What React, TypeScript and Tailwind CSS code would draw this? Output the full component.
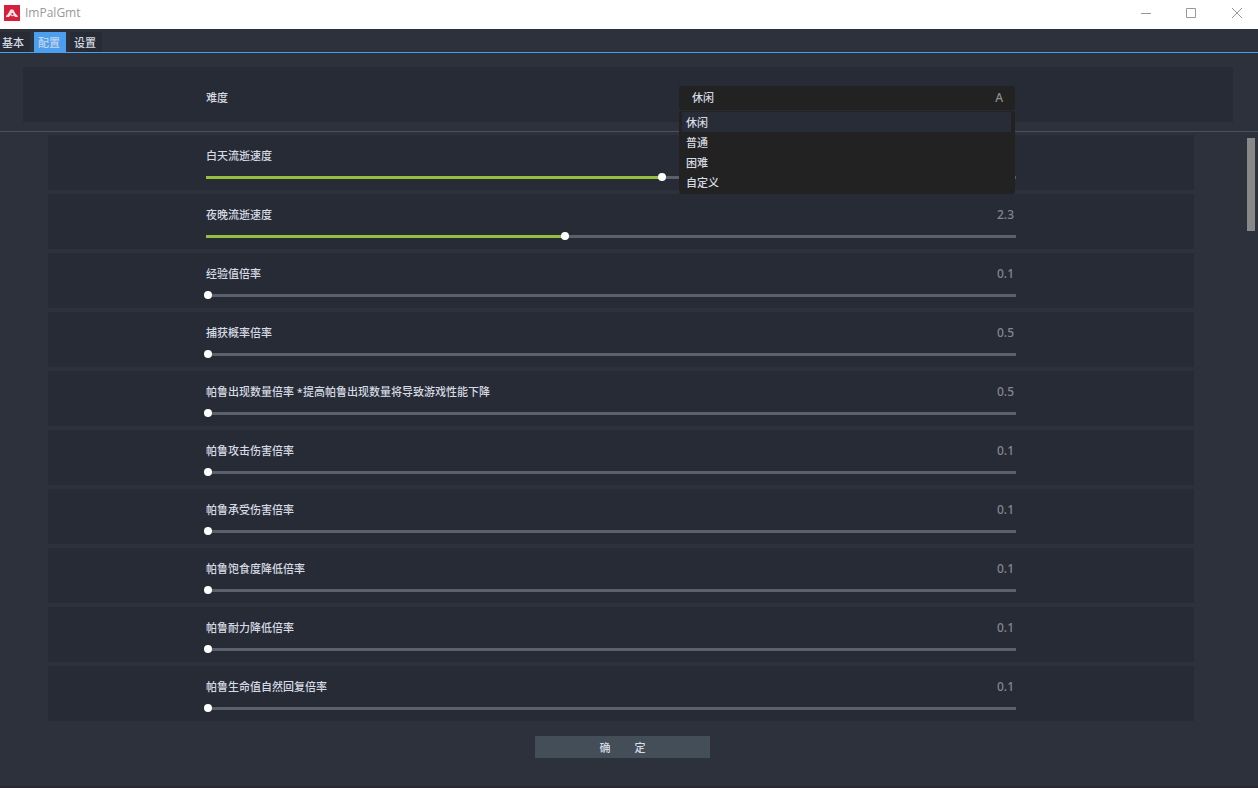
import { useState } from "react";
import type { CSSProperties } from "react";

const TABS = ["基本", "配置", "设置"];
const LEVELS = ["休闲", "普通", "困难", "自定义"];

type Setting = { label: string; min: number; max: number; value: number };

const SETTINGS: Setting[] = [
  { label: "白天流逝速度", min: 0.1, max: 5, value: 2.86 },
  { label: "夜晚流逝速度", min: 0.1, max: 5, value: 2.27 },
  { label: "经验值倍率", min: 0.1, max: 20, value: 0.1 },
  { label: "捕获概率倍率", min: 0.5, max: 2, value: 0.5 },
  { label: "帕鲁出现数量倍率 *提高帕鲁出现数量将导致游戏性能下降", min: 0.5, max: 3, value: 0.5 },
  { label: "帕鲁攻击伤害倍率", min: 0.1, max: 5, value: 0.1 },
  { label: "帕鲁承受伤害倍率", min: 0.1, max: 5, value: 0.1 },
  { label: "帕鲁饱食度降低倍率", min: 0.1, max: 5, value: 0.1 },
  { label: "帕鲁耐力降低倍率", min: 0.1, max: 5, value: 0.1 },
  { label: "帕鲁生命值自然回复倍率", min: 0.1, max: 5, value: 0.1 },
];

function TitleBar() {
  return (
    <header className="flex h-[29px] justify-between bg-white pl-1 text-[#999999]">
      <div className="flex h-[26px] items-center gap-[5px]">
        <svg width="16" height="16" viewBox="0 0 16 16" aria-hidden="true">
          <rect width="16" height="16" fill="#d61f3c" />
          <path d="M2 12V11L4 9 6.4 4.4H9.2L11.4 8.4 13.8 11V12H11L9.8 10.6 8.6 11.6 6.6 10.2 5 12Z" fill="#f1e6e6" />
          <path d="M7 9 8.2 7.8 9.6 9.2 8.6 10.2Z" fill="#d61f3c" />
        </svg>
        <h1 className="font-['Open_Sans','Noto_Sans',sans-serif] text-[12px] leading-4 font-normal">ImPalGmt</h1>
      </div>
      <div className="flex">
        <button type="button" aria-label="最小化" className="flex h-[26px] w-[45px] items-center justify-center">
          <svg width="10" height="10" viewBox="0 0 10 10" fill="none" stroke="currentColor"><path d="M0 5.5h10" /></svg>
        </button>
        <button type="button" aria-label="最大化" className="flex h-[26px] w-[45px] items-center justify-center">
          <svg width="10" height="10" viewBox="0 0 10 10" fill="none" stroke="currentColor"><path d="M.5.5h9v9h-9z" /></svg>
        </button>
        <button type="button" aria-label="关闭" className="flex h-[26px] w-[45px] items-center justify-center pl-[2px]">
          <svg width="10" height="10" viewBox="0 0 10 10" fill="none" stroke="currentColor"><path d="m0 0 10 10M10 0 0 10" /></svg>
        </button>
      </div>
    </header>
  );
}

function Tabs() {
  const [active, setActive] = useState(1);
  return (
    <nav role="tablist" className="flex gap-1 border-b border-[#4b9fee] pt-[3px]">
      {TABS.map((tab, i) => (
        <button
          key={tab}
          type="button"
          role="tab"
          aria-selected={i === active}
          onClick={() => setActive(i)}
          className={
            "h-5 pt-[2px] text-left leading-[18px] " +
            (i === 0 ? "w-[30px] pl-[2px] " : "w-8 pl-1 ") +
            (i === active ? "bg-[#4b9fee] text-[#c4d6ec]" : "bg-[#272b35] text-[#d5dae3]")
          }
        >
          {tab}
        </button>
      ))}
    </nav>
  );
}

function Difficulty() {
  const [open, setOpen] = useState(true);
  const [level, setLevel] = useState(LEVELS[0]);
  return (
    <section className="mr-[25px] ml-[23px] flex h-[55px] items-center justify-between bg-[#272b35] pt-[6px] pr-[218px] pl-[183px]">
      <label htmlFor="level" className="pt-[2px]">难度</label>
      <div className="relative w-[336px]">
        <select
          id="level"
          value={level}
          onChange={(e) => setLevel(e.target.value)}
          onMouseDown={(e) => {
            e.preventDefault();
            setOpen(!open);
          }}
          className="block h-6 w-full appearance-none rounded-[3px] bg-[#222222] px-[13px] pt-[2px] outline-none"
        >
          {LEVELS.map((name) => (
            <option key={name}>{name}</option>
          ))}
        </select>
        <span aria-hidden="true" className="pointer-events-none absolute top-0 right-3 text-[12px] leading-6 text-[#8e8e8e]">
          A
        </span>
        {open && (
          <ul role="listbox" aria-label="难度" className="absolute top-[25px] left-0 z-10 w-full rounded-[3px] bg-[#222222] pt-[1px] pr-1 pb-[2px] pl-[3px]">
            {LEVELS.map((name) => (
              <li
                key={name}
                role="option"
                aria-selected={name === level}
                onClick={() => {
                  setLevel(name);
                  setOpen(false);
                }}
                className="h-5 px-1 pt-[1px] leading-5 aria-selected:bg-[#282c36]"
              >
                {name}
              </li>
            ))}
          </ul>
        )}
      </div>
    </section>
  );
}

function SettingRow({ setting, id }: { setting: Setting; id: string }) {
  const [value, setValue] = useState(setting.value);
  const percent = ((value - setting.min) / (setting.max - setting.min)) * 100;
  return (
    <li className="h-[55px] bg-[#272b35] pt-[13px] pr-[178px] pl-[158px]">
      <div className="flex h-4 items-center justify-between pr-[2px]">
        <label htmlFor={id}>{setting.label}</label>
        <output htmlFor={id} className="text-[12px] text-[#82868f]">
          {value.toFixed(1)}
        </output>
      </div>
      <div className="-mx-[2px] mt-[9px]">
        <input
          id={id}
          type="range"
          min={setting.min}
          max={setting.max}
          step={0.01}
          value={value}
          onChange={(e) => setValue(Number(e.target.value))}
          style={{ "--fill": `${percent}%` } as CSSProperties}
          className="block h-2 w-full appearance-none bg-transparent bg-[linear-gradient(to_right,transparent_2px,#94bf3f_2px,#94bf3f_var(--fill),#5a616b_var(--fill),#5a616b_calc(100%-2px),transparent_calc(100%-2px))] bg-[length:100%_3px] bg-center bg-no-repeat outline-none [&::-webkit-slider-thumb]:size-2 [&::-webkit-slider-thumb]:appearance-none [&::-webkit-slider-thumb]:rounded-full [&::-webkit-slider-thumb]:bg-white"
        />
      </div>
    </li>
  );
}

export default function App() {
  return (
    <div className="flex min-h-screen flex-col border-b-2 border-[#2a2733] bg-[#2d313b] font-['Noto_Sans','Noto_Sans_CJK_SC',sans-serif] text-[11px] font-medium text-[#d5dae3]">
      <TitleBar />
      <Tabs />
      <main className="pt-[14px]">
        <Difficulty />
        <div className="mt-[9px] flex border-t border-[#4b505c] pt-[3px] pr-[3px]">
          <div className="grow">
            <ul className="flex flex-col gap-1 pr-[53px] pl-12">
              {SETTINGS.map((setting, i) => (
                <SettingRow key={setting.label} setting={setting} id={`setting-${i}`} />
              ))}
            </ul>
            <div className="mt-[15px] flex justify-center pr-[2px]">
              <button type="button" className="flex h-[22px] w-[175px] items-center justify-center gap-6 bg-[#444e58] pt-[2px]">
                <span>确</span>
                <span>定</span>
              </button>
            </div>
          </div>
          <div aria-hidden="true" className="mt-[3px] h-[93px] w-2 bg-[#888888]" />
        </div>
      </main>
    </div>
  );
}
